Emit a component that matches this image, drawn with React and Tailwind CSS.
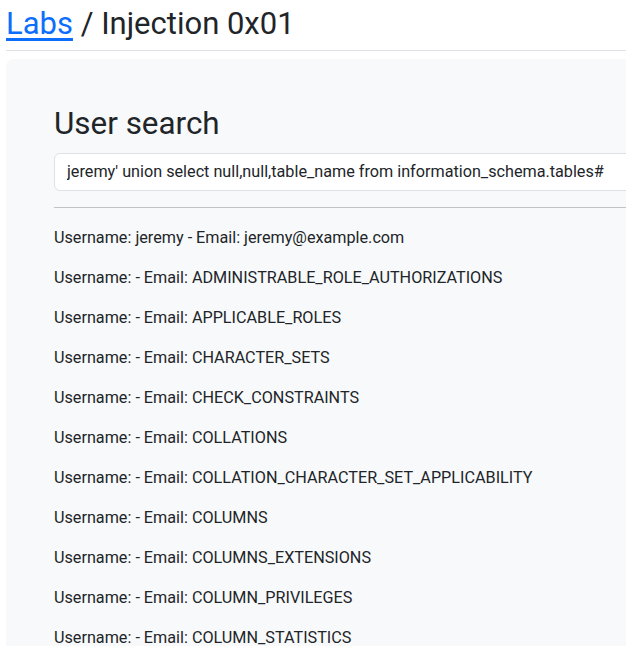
import React from 'react';

const tables = [
  'ADMINISTRABLE_ROLE_AUTHORIZATIONS',
  'APPLICABLE_ROLES',
  'CHARACTER_SETS',
  'CHECK_CONSTRAINTS',
  'COLLATIONS',
  'COLLATION_CHARACTER_SET_APPLICABILITY',
  'COLUMNS',
  'COLUMNS_EXTENSIONS',
  'COLUMN_PRIVILEGES',
  'COLUMN_STATISTICS',
  'ENABLED_ROLES',
];

export default function App() {
  return (
    <div className="h-screen overflow-hidden bg-white text-[#212529] font-['Roboto',sans-serif] text-base leading-6">
      <div className="w-[760px] pl-[6px]">
        {/* Title */}
        <h1 className="text-[31px] leading-[1.2] pt-[5px] pb-[8px] border-b border-[#dee2e6]">
          <a href="#" className="text-[#0d6efd] underline underline-offset-[4px]">Labs</a> / Injection 0x01
        </h1>

        {/* Search panel */}
        <div className="mt-[8px] bg-[#f8f9fa] rounded-lg p-12">
          <h2 className="text-[31.4px] leading-[1.2] -mt-[2px] mb-[10px]">User search</h2>
          <input
            type="text"
            readOnly
            value="jeremy' union select null,null,table_name from information_schema.tables#"
            className="w-full h-[38px] px-3 py-1.5 bg-white border border-[#dee2e6] rounded-md text-[16.2px] text-[#212529] outline-none"
          />
          <hr className="mt-4 mb-[18px] border-t border-[#212529] opacity-25" />
          <div className="text-[16.2px]">
            <p className="mb-4">Username: jeremy - Email: jeremy@example.com</p>
            {tables.map((t) => (
              <p key={t} className="mb-4">Username: - Email: {t}</p>
            ))}
          </div>
        </div>
      </div>
    </div>
  );
}
